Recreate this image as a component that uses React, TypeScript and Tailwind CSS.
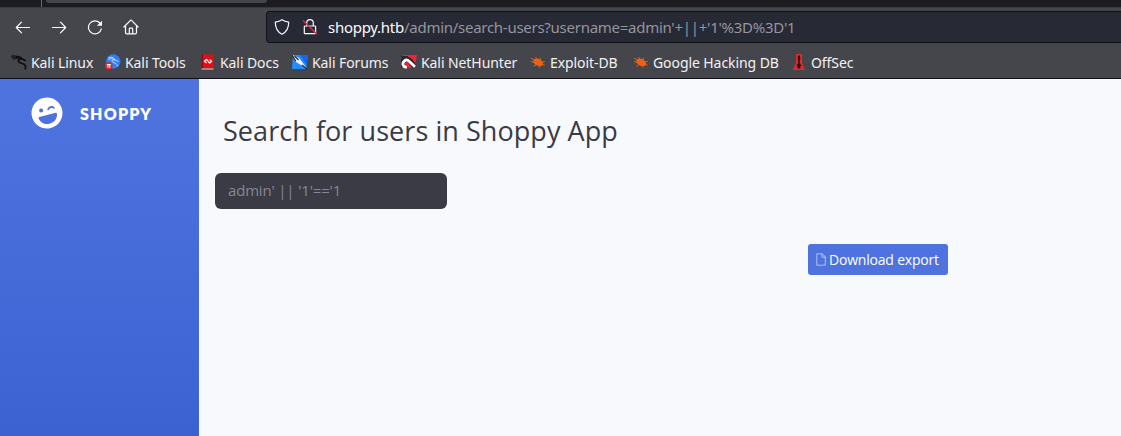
import type { ReactNode } from "react";
import { FaLaughWink } from "react-icons/fa";

function Dragon({ className }: { className: string }) {
  return (
    <svg viewBox="0 0 16 16" className={className} fill="none" stroke="currentColor">
      <path d="M0 2.200 3.500 1.800l3 .9M.6 4l3-.9 3 .2M1.800 5.600l3-1.300 3.500-.2" strokeWidth="1" />
      <path d="M5 2.800c3-.4 5 .6 6.200 2.300l3.600 1.600M11 5C8 4.400 6.300 6.400 8 8.200c2 1.800 6 .8 6.500 3.800.2 1.500-.2 2.500-.4 3.500" strokeWidth="1.700" />
    </svg>
  );
}

function ToolsIcon() {
  return (
    <svg viewBox="0 0 16 16" className="size-4">
      <circle cx="8.300" cy="7.500" r="7.200" fill="#2b7fff" />
      <path d="M3 5.500q4-2 7 .5l3.500 1.500M3.500 3.500q4-1 6 1M10 6c-3-.8-4 1-2 2.300 2.500 1 4 1 4.500 4" fill="none" stroke="#d3e4ff" strokeWidth=".9" />
      <circle cx="3.800" cy="11.800" r="3.800" fill="#e0252d" />
      <path d="M1.800 10.500h4M2.900 10.500v3.300M4.800 10.500v3.300" stroke="#fff" strokeWidth="1" />
    </svg>
  );
}

function DocsIcon() {
  return (
    <svg viewBox="0 0 16 16" className="size-4">
      <path d="M1.500 .5h12v14h-12z" fill="#df1118" />
      <path d="M1.500 .5h1.500v14H1.500z" fill="#8d0b12" />
      <path d="M1.500 14.500h12v1h-12z" fill="#d6d0d0" />
      <path d="M6.600 5.300 4.500 7.300l2 1.700M9.600 5.600l2 1.700-2.100 2M6.600 5.300l3 3.800" fill="none" stroke="#fff" strokeWidth="1.200" />
    </svg>
  );
}

function ForumsIcon() {
  return (
    <svg viewBox="0 0 16 16" className="size-4">
      <path d="M1 1h15l-2 14H0z" fill="#258cff" />
      <path d="M8 1h8l-1.500 10z" fill="#1767ee" />
      <path d="M0 .5 7 4l3.500 4.500 4.500 6-6-3.500-5-3z" fill="#f4f4f4" />
      <path d="m0 .8 3.800 6.500M2.500 2l4 4M10 11l5 4" stroke="#22252d" strokeWidth="1.100" />
    </svg>
  );
}

function NetHunterIcon() {
  return (
    <svg viewBox="0 0 16 16" className="size-4">
      <path d="M2 1h14l-2.500 13H1z" fill="#e92632" />
      <path d="M0 2h7v3L2 8z" fill="#272a31" />
      <path d="M2.500 12.500C.2 9.500 2 5.600 5.400 5.200c3.200-.4 4.600 3 7.800 7.500" fill="none" stroke="#23252b" strokeWidth="5" />
      <path d="M5.800 12.800C2.200 14 .6 9.600 3.300 7c3.700-3.300 6 2.200 10.700 5.700" fill="none" stroke="#fff" strokeWidth="2.800" />
    </svg>
  );
}

function BugIcon() {
  return (
    <svg viewBox="0 0 16 16" className="size-4">
      <ellipse cx="8.200" cy="8.300" rx="5.300" ry="3.400" transform="rotate(28 8.200 8.300)" fill="#ef6012" />
      <path d="M4.500 6 .8 4M5 9 1 7.400M6.500 10.500l-3 1.800M7 5.500 5.500 3M10 6l.5-2.300M12 8l2.800-.6M12.500 10.500l2.200.6M10 12l-.5 1.600" stroke="#ef6012" strokeWidth=".9" />
    </svg>
  );
}

function OffSecIcon() {
  return (
    <svg viewBox="0 0 16 16" className="size-4">
      <path d="M5 0h6v9l3 7H1.500L5 9z" fill="#e2272d" />
      <path d="M7.200 1.500h1.600l.6 3-.6 1.500v3.500l1.700 2-1.200 1v2H6.700v-2l-1.200-1 1.700-2V6l-.6-1.500z" fill="#25151a" />
    </svg>
  );
}

function Bookmark({ icon, label, className }: { icon: ReactNode; label: string; className: string }) {
  return (
    <a className={`flex shrink-0 items-center gap-1 whitespace-nowrap ${className}`}>
      <span className="shrink-0">{icon}</span>
      {label}
    </a>
  );
}

function Toolbar() {
  return (
    <div className="flex h-[38px] items-center pl-[15px] text-[#fbfbfe]">
      <div className="flex w-[251px] shrink-0 items-center gap-5">
        <svg viewBox="0 0 16 16" className="size-4" fill="none" stroke="currentColor" strokeWidth="1.200" strokeLinecap="round" strokeLinejoin="round">
          <path d="M14.500 8.500h-13M6.500 3.200 1.300 8.500l5.200 5.300" />
        </svg>
        <svg viewBox="0 0 16 16" className="size-4" fill="none" stroke="currentColor" strokeWidth="1.200" strokeLinecap="round" strokeLinejoin="round">
          <path d="M1.500 8.500h13M9.500 3.200l5.200 5.300-5.200 5.300" />
        </svg>
        <svg viewBox="0 0 16 16" className="size-4" fill="none" stroke="currentColor" strokeWidth="1.200" strokeLinecap="round">
          <path d="M14.300 9.800A6.500 6.500 0 1 1 12.800 4" />
          <path d="M15 1.700v5.100H9.900z" fill="currentColor" stroke="none" />
        </svg>
        <svg viewBox="0 0 16 16" className="size-4" fill="none" stroke="currentColor" strokeWidth="1.200" strokeLinecap="round" strokeLinejoin="round">
          <path d="M.9 8 7.500 1.300q.5-.4 1 0L15.100 8M2.500 7v6.500q0 1.300 1.300 1.300h8.400q1.300 0 1.300-1.300V7M6.300 14.500V10q0-.8.8-.8h1.800q.8 0 .8.800v4.500" />
        </svg>
      </div>
      <div className="flex h-8 grow items-center rounded-l border border-r-0 border-[#111217] bg-[#272935] pl-[7px]">
        <svg viewBox="0 0 16 16" className="size-4" fill="none" stroke="currentColor" strokeWidth="1.200" strokeLinejoin="round">
          <path d="M8 .7c2 1.400 4.300 2.100 6.700 2.500C14.700 9 12.500 13 8 15.200 3.500 13 1.300 9 1.300 3.200 3.700 2.800 6 2.100 8 .7z" />
        </svg>
        <svg viewBox="0 0 16 16" className="ml-3 size-4" fill="none" strokeWidth="1.200" strokeLinecap="round">
          <path d="M4.700 7V4a3.300 3.300 0 0 1 6.600 0v3M3.200 7h9.600q.8 0 .8.800v6q0 .9-.8.900H3.200q-.9 0-.9-.9v-6q0-.8.900-.8z" stroke="#fbfbfe" />
          <path d="m1.500 2 13 12.800" stroke="#e22850" strokeWidth="1.500" />
        </svg>
        <span className="ml-[10px] whitespace-pre text-[15px] tracking-[-0.270px] text-[#95959d]">
          <span className="text-[#fbfbfe]">shoppy.htb</span>/admin/search-users?username=admin'+||+'1'%3D%3D'1
        </span>
      </div>
    </div>
  );
}

export default function App() {
  return (
    <div className="flex h-[436px] w-full flex-col overflow-hidden bg-[#f8f9fd]">
      <header className="flex h-[79px] shrink-0 flex-col border-b border-[#111217] bg-[#45464c] font-['Noto_Sans',sans-serif]">
        <div className="flex h-[7px] bg-[#1b1b20]">
          <div className="h-[7px] w-[42px] shrink-0 border-r border-[#66676d]" />
          <div className="ml-1 h-[3px] w-[221px] rounded-b bg-[#45464c]" />
        </div>
        <div className="h-px shrink-0 bg-[#38393e]" />
        <Toolbar />
        <nav className="flex h-[32px] items-center pl-[11px] text-[14px] tracking-[-0.080px] text-[#f2f2f4]">
          <Bookmark className="w-[94px]" icon={<Dragon className="size-4 text-[#0c0d10]" />} label="Kali Linux" />
          <Bookmark className="w-[95px]" icon={<ToolsIcon />} label="Kali Tools" />
          <Bookmark className="w-[92px]" icon={<DocsIcon />} label="Kali Docs" />
          <Bookmark className="w-[109px]" icon={<ForumsIcon />} label="Kali Forums" />
          <Bookmark className="w-[129px]" icon={<NetHunterIcon />} label="Kali NetHunter" />
          <Bookmark className="w-[103px]" icon={<BugIcon />} label="Exploit-DB" />
          <Bookmark className="w-[158px]" icon={<BugIcon />} label="Google Hacking DB" />
          <Bookmark className="w-[80px]" icon={<OffSecIcon />} label="OffSec" />
        </nav>
      </header>
      <div className="flex min-h-0 grow font-['Open_Sans',sans-serif]">
        <aside className="w-[199px] shrink-0 bg-linear-to-b from-[#4e73df] from-10% to-[#3c62d2] pt-[18px]">
          <div className="flex h-8 items-center pl-[31px] text-white">
            <FaLaughWink className="size-8 shrink-0 rotate-[-15deg]" />
            <span className="mt-[2px] ml-[17px] font-['Lato',sans-serif] text-[16px] leading-6 font-extrabold tracking-[1.200px]">SHOPPY</span>
          </div>
        </aside>
        <main className="grow pl-4">
          <h1 className="mt-[33px] ml-2 h-[39px] whitespace-nowrap text-[27px] leading-[38px] tracking-[0.060px] text-[#3a3b45]">
            Search for users in Shoppy App
          </h1>
          <input
            aria-label="Username"
            className="mt-[22px] block h-9 w-[232px] rounded-[6px] bg-[#3a3b45] pr-3 pb-0.5 pl-[13px] text-[15px] tracking-[-0.180px] text-[#858796] outline-none placeholder:text-[#858796] placeholder:opacity-100"
            placeholder="admin' || '1'=='1"
          />
          <button className="mt-[35px] ml-[593px] flex h-[31px] w-[140px] items-center rounded-[3px] bg-[#4e73df] pl-2 text-[14px] tracking-[-0.200px] whitespace-nowrap text-white">
            <svg viewBox="0 0 10 13" className="mr-[3px] h-[13px] w-[10px] shrink-0" fill="none" stroke="currentColor" strokeOpacity="0.55" strokeLinejoin="round">
              <path d="M.8 .8h5.500l3 3v8.400H.8zM6 .8v3.400h3.300" />
            </svg>
            Download export
          </button>
        </main>
      </div>
    </div>
  );
}
